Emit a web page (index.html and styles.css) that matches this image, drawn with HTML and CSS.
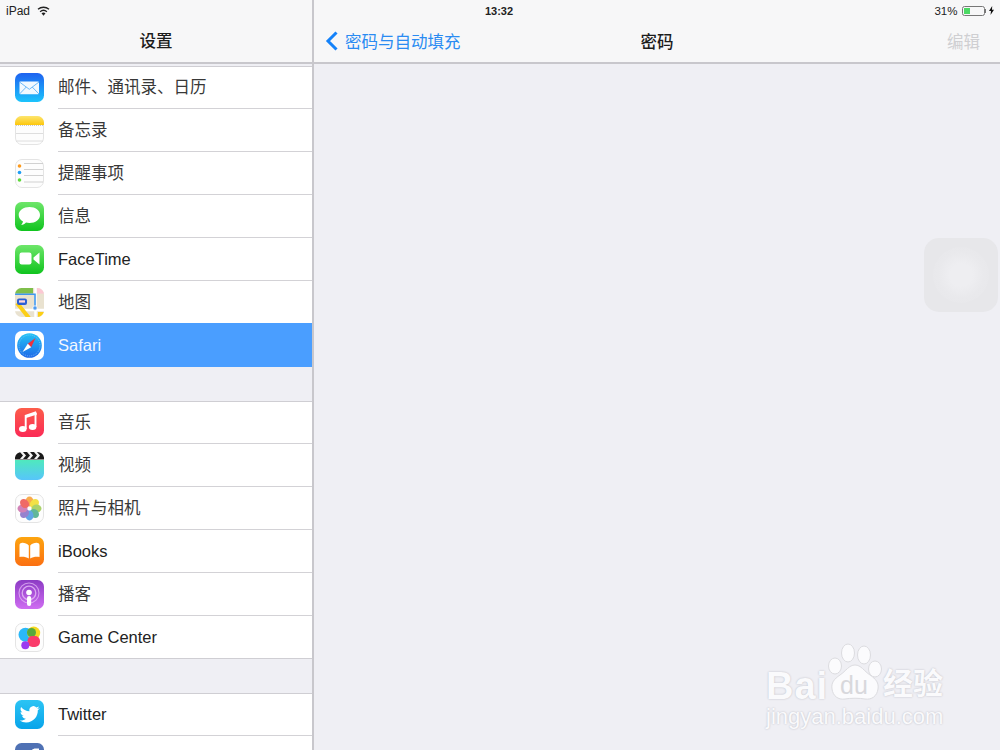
FILE: index.html
```html
<!DOCTYPE html>
<html lang="zh">
<head>
<meta charset="utf-8">
<title>设置</title>
<link rel="stylesheet" href="styles.css">
</head>
<body>
<div class="ipad">
  <aside class="sidebar">
    <header class="side-head">
      <h1 class="side-title">设置</h1>
    </header>
    <div class="list-scroll">
      <ul class="group">
        <li class="row">
          <svg class="ico" viewBox="0 0 29 29"><defs><linearGradient id="gm" x1="0" y1="0" x2="0" y2="1"><stop offset="0" stop-color="#1e62f0"/><stop offset="1" stop-color="#1cc4fc"/></linearGradient></defs><rect width="29" height="29" rx="6.5" fill="url(#gm)"/><rect x="4.500" y="8.500" width="19.500" height="12.800" rx="1" fill="#f2f9ff"/><path d="M4.500 9l9.800 7.300L24 9M4.500 21l6.800-7M24 21l-6.800-7" fill="none" stroke="#5fb2f7" stroke-width=".9"/></svg>
          <span class="label zh">邮件、通讯录、日历</span>
        </li>
        <li class="row">
          <svg class="ico" viewBox="0 0 29 29"><defs><linearGradient id="gn" x1="0" y1="0" x2="0" y2="1"><stop offset="0" stop-color="#fde56e"/><stop offset="1" stop-color="#fdc70c"/></linearGradient></defs><rect x=".5" y=".5" width="28" height="28" rx="6.5" fill="#fdfdfd" stroke="#e4e4e4"/><path d="M0 9V6.500A6.500 6.500 0 0 1 6.500 0h16A6.500 6.500 0 0 1 29 6.500V9Z" fill="url(#gn)"/><path d="M1 9.500h27" stroke="#bbb" stroke-width=".8" stroke-dasharray="1 1"/><path d="M1 17.500h27M1 25h27" stroke="#d6d6d6" stroke-width=".8"/></svg>
          <span class="label zh">备忘录</span>
        </li>
        <li class="row">
          <svg class="ico" viewBox="0 0 29 29"><rect x=".5" y=".5" width="28" height="28" rx="6.5" fill="#fdfdfd" stroke="#e4e4e4"/><path d="M9 4.500h19M9 10.500h19M9 16.500h19M9 23h19" stroke="#bdbdbd" stroke-width=".7"/><circle cx="4.500" cy="7" r="1.800" fill="#fd9a1c"/><circle cx="4.500" cy="13.500" r="1.800" fill="#1e9df5"/><circle cx="4.500" cy="21" r="1.800" fill="#5fd93b"/></svg>
          <span class="label zh">提醒事项</span>
        </li>
        <li class="row">
          <svg class="ico" viewBox="0 0 29 29"><defs><linearGradient id="gg" x1="0" y1="0" x2="0" y2="1"><stop offset="0" stop-color="#6ee66a"/><stop offset="1" stop-color="#10c41e"/></linearGradient></defs><rect width="29" height="29" rx="6.5" fill="url(#gg)"/><path d="M14.500 5c-6 0-10.800 3.500-10.800 8 0 2.800 1.700 5 4.300 6.400-.3 1.300-1.200 2.800-2 3.600 2 0 3.800-1.200 5-2.400 1 .2 2.300.4 3.500.4 6 0 10.500-3.500 10.500-8s-4.500-8-10.500-8Z" fill="#fff"/></svg>
          <span class="label zh">信息</span>
        </li>
        <li class="row">
          <svg class="ico" viewBox="0 0 29 29"><rect width="29" height="29" rx="6.500" fill="url(#gg)"/><rect x="4.500" y="7.500" width="12" height="12" rx="2.200" fill="#fff"/><path d="M18.500 12.500 24.500 7.500v12L18.500 14.500Z" fill="#fff"/></svg>
          <span class="label">FaceTime</span>
        </li>
        <li class="row">
          <svg class="ico" viewBox="0 0 29 29"><clipPath id="cm"><rect width="29" height="29" rx="6.500"/></clipPath><g clip-path="url(#cm)"><rect width="29" height="29" fill="#e9e2d0"/><rect width="18" height="5.600" fill="#7fbf4b"/><rect x="22" width="7" height="5.600" fill="#fcc8d4"/><path d="M20.500 0v29M0 22h29" stroke="#fff" stroke-width="2.500" fill="none"/><path d="M0 6.300h20V20" stroke="#3f97ee" stroke-width="1.600" fill="none"/><path d="M2 15 14 30" stroke="#fccf16" stroke-width="4" fill="none"/><rect x="2" y="10.500" width="10" height="6.500" rx="2" fill="#2c5fd6"/><rect x="4" y="12.300" width="6" height="2.300" fill="#ffd7dc"/><circle cx="20" cy="20" r="2.200" fill="#4d9bf0" stroke="#fff" stroke-width=".8"/><rect x="23" y="24" width="6" height="5" fill="#fccf16"/></g></svg>
          <span class="label zh">地图</span>
        </li>
        <li class="row selected">
          <svg class="ico" viewBox="0 0 29 29"><defs><linearGradient id="gs" x1="0" y1="0" x2="0" y2="1"><stop offset="0" stop-color="#22c3f5"/><stop offset="1" stop-color="#2069e8"/></linearGradient></defs><rect width="29" height="29" rx="6.500" fill="#fff"/><circle cx="14.500" cy="14.500" r="12.300" fill="url(#gs)"/><circle cx="14.500" cy="14.500" r="10.500" fill="none" stroke="#9fd4fa" stroke-width=".6" stroke-dasharray="1 1"/><path d="M20.500 7 12.800 12.800 16.200 16.200Z" fill="#f0313c"/><path d="M7.500 21 12.800 12.800 16.200 16.200Z" fill="#fff"/></svg>
          <span class="label">Safari</span>
        </li>
      </ul>
      <ul class="group">
        <li class="row">
          <svg class="ico" viewBox="0 0 29 29"><defs><linearGradient id="gr" x1="0" y1="0" x2="0" y2="1"><stop offset="0" stop-color="#fc5d4a"/><stop offset="1" stop-color="#fb2a56"/></linearGradient></defs><rect width="29" height="29" rx="6.500" fill="url(#gr)"/><path d="M10.500 8.500 21.500 4.800" fill="none" stroke="#fff" stroke-width="3.400"/><path d="M10.700 7V21M20.500 5V19" fill="none" stroke="#fff" stroke-width="1.900"/><ellipse cx="7.800" cy="21" rx="3.800" ry="3" fill="#fff"/><ellipse cx="17.600" cy="19" rx="3.800" ry="3" fill="#fff"/></svg>
          <span class="label zh">音乐</span>
        </li>
        <li class="row">
          <svg class="ico" viewBox="0 0 29 29"><defs><linearGradient id="gv" x1="0" y1="0" x2="0" y2="1"><stop offset="0" stop-color="#4fe9bd"/><stop offset="1" stop-color="#57c5fb"/></linearGradient></defs><path d="M0 9h29v13.500a6.500 6.500 0 0 1-6.500 6.500h-16A6.500 6.500 0 0 1 0 22.500Z" fill="url(#gv)"/><path d="M0 8.500V6.500A6.500 6.500 0 0 1 6.500 1h16A6.500 6.500 0 0 1 29 6.500v2Z" fill="#1a1a1a"/><path d="M5 1h3l3 3.500-3 3.500H5l3-3.500ZM12 1h3l3 3.500-3 3.500h-3l3-3.500ZM19 1h3l3 3.500-3 3.500h-3l3-3.500Z" fill="#f4f4f4"/></svg>
          <span class="label zh">视频</span>
        </li>
        <li class="row">
          <svg class="ico" viewBox="0 0 29 29"><rect x=".5" y=".5" width="28" height="28" rx="6.500" fill="#fdfdfd" stroke="#e4e4e4"/><g opacity=".82" transform="translate(14.500 14.500)"><ellipse cy="-7" rx="4" ry="5" fill="#f99a27"/><ellipse cy="-7" rx="4" ry="5" fill="#f0dc1e" transform="rotate(45)"/><ellipse cy="-7" rx="4" ry="5" fill="#98c94a" transform="rotate(90)"/><ellipse cy="-7" rx="4" ry="5" fill="#3fa884" transform="rotate(135)"/><ellipse cy="-7" rx="4" ry="5" fill="#3f94e0" transform="rotate(180)"/><ellipse cy="-7" rx="4" ry="5" fill="#8068c4" transform="rotate(225)"/><ellipse cy="-7" rx="4" ry="5" fill="#c868a8" transform="rotate(270)"/><ellipse cy="-7" rx="4" ry="5" fill="#ec4a46" transform="rotate(315)"/></g></svg>
          <span class="label zh">照片与相机</span>
        </li>
        <li class="row">
          <svg class="ico" viewBox="0 0 29 29"><defs><linearGradient id="gb" x1="0" y1="0" x2="0" y2="1"><stop offset="0" stop-color="#fda50f"/><stop offset="1" stop-color="#fb6f12"/></linearGradient></defs><rect width="29" height="29" rx="6.500" fill="url(#gb)"/><path d="M13.800 8.500C12 6.500 8.500 5.500 6.500 6c-1.500.3-2 1-2 2.500V20c3.500-.5 7 0 9.300 1.500ZM15.200 8.500c1.800-2 5.300-3 7.300-2.500 1.500.3 2 1 2 2.500V20c-3.500-.5-7 0-9.300 1.500Z" fill="#fff"/></svg>
          <span class="label">iBooks</span>
        </li>
        <li class="row">
          <svg class="ico" viewBox="0 0 29 29"><defs><linearGradient id="gp" x1="0" y1="0" x2="0" y2="1"><stop offset="0" stop-color="#8c3bc4"/><stop offset="1" stop-color="#cf6df2"/></linearGradient></defs><rect width="29" height="29" rx="6.500" fill="url(#gp)"/><circle cx="14" cy="13" r="10" fill="none" stroke="#e4b8f5" stroke-width="1.100" opacity=".75"/><circle cx="14" cy="13" r="6.800" fill="none" stroke="#e4b8f5" stroke-width="1.300" opacity=".85"/><circle cx="14" cy="12.500" r="2.800" fill="#fff"/><rect x="12" y="16" width="4.200" height="10" rx="2.100" fill="#fff"/></svg>
          <span class="label zh">播客</span>
        </li>
        <li class="row">
          <svg class="ico" viewBox="0 0 29 29"><rect x=".5" y=".5" width="28" height="28" rx="6.500" fill="#fdfdfd" stroke="#e4e4e4"/><circle cx="10.500" cy="11.700" r="7" fill="#2ab8f8"/><circle cx="18.700" cy="10" r="6.500" fill="#f6d820"/><circle cx="16.500" cy="9.500" r="4.500" fill="#57a83c"/><rect x="12.500" y="13" width="12.500" height="11" rx="5" fill="#fa3b6a"/><circle cx="10.300" cy="22.300" r="4" fill="#9b3cf0"/></svg>
          <span class="label">Game Center</span>
        </li>
      </ul>
      <ul class="group">
        <li class="row">
          <svg class="ico" viewBox="0 0 29 29"><defs><linearGradient id="gt" x1="0" y1="0" x2="0" y2="1"><stop offset="0" stop-color="#2cc4f4"/><stop offset="1" stop-color="#08a4ea"/></linearGradient></defs><rect width="29" height="29" rx="6.500" fill="url(#gt)"/><path d="M24.500 8.200c-.8.400-1.500.5-2.300.6.800-.5 1.500-1.200 1.800-2.200-.8.500-1.600.8-2.600 1a4 4 0 0 0-6.900 3.700c-3.400-.2-6.400-1.800-8.400-4.300-1.100 1.900-.5 4.200 1.300 5.400-.7 0-1.300-.2-1.800-.5 0 2 1.400 3.600 3.300 4-.6.200-1.200.2-1.800.1.500 1.600 2 2.700 3.800 2.800-1.800 1.400-4 2-6.100 1.700 1.800 1.200 4 1.900 6.300 1.900 7.600 0 12-6.400 11.700-12.200.8-.6 1.500-1.300 2-2Z" fill="#fff"/></svg>
          <span class="label">Twitter</span>
        </li>
        <li class="row">
          <svg class="ico" viewBox="0 0 29 29"><rect width="29" height="29" rx="6.500" fill="#4f71b4"/><path d="M16 29V17h-3v-4h3v-3c0-3 2-4.500 4.500-4.500H24V9h-2c-1.500 0-2 .6-2 2v2h4l-.5 4H20v12Z" fill="#fff"/></svg>
        </li>
      </ul>
    </div>
  </aside>
  <main class="detail">
    <header class="detail-head">
      <nav class="nav">
        <a class="back">
          <svg class="chev" width="14" height="20" viewBox="0 0 14 20"><path d="M11.500 1.500 3 10l8.500 8.500" fill="none" stroke="#1482fa" stroke-width="3"/></svg>
          <span>密码与自动填充</span>
        </a>
        <h2 class="detail-title">密码</h2>
        <span class="edit">编辑</span>
      </nav>
    </header>
  </main>
  <div class="statusbar">
    <div class="status-left">
      <span>iPad</span>
      <svg width="13" height="10" viewBox="0 0 13 10"><path d="M6.500 9.800 4.500 7.300a3.200 3.200 0 0 1 4 0Z" fill="#222"/><path d="M3.100 5.700a5.400 5.400 0 0 1 6.800 0M1 3.200a8.700 8.700 0 0 1 11 0" fill="none" stroke="#222" stroke-width="1.400"/></svg>
    </div>
    <span class="clock">13:32</span>
    <div class="status-right">
      <span>31%</span>
      <svg width="23" height="10" viewBox="0 0 23 10"><rect x=".5" y=".5" width="22" height="9" rx="2" fill="none" stroke="#777" stroke-width="1"/><rect x="2" y="2" width="6" height="6" fill="#4cd964"/></svg>
      <i class="nub"></i>
      <svg width="5" height="9" viewBox="0 0 5 9"><path d="M3.200 0 0 5h2L1.500 9 5 3.800H3Z" fill="#111"/></svg>
    </div>
  </div>
  <div class="assistive"><div class="assistive-dot"></div></div>
  <div class="watermark">
    <div class="wm-top">
      <span class="wm-bai">Bai</span>
      <svg class="wm-paw" width="58" height="60" viewBox="0 0 58 60">
        <g fill="#fbfbfd" stroke="#dcdce0" stroke-width="1">
          <ellipse cx="9" cy="24" rx="6.500" ry="8"/><ellipse cx="22" cy="11" rx="6.500" ry="9"/><ellipse cx="38" cy="13" rx="6.500" ry="9"/><ellipse cx="49" cy="27" rx="6.500" ry="8"/>
          <path d="M29 23c6 0 9 6 15 10 6 4 9 8 8 14-1 7-6 11-13 10-5-1-15-1-20 0-7 1-12-3-13-10-1-6 2-10 8-14 6-4 9-10 15-10Z"/>
        </g>
        <text x="28" y="52" class="wm-du" text-anchor="middle">du</text>
      </svg>
      <span class="wm-jy">经验</span>
    </div>
    <div class="wm-url">jingyan.baidu.com</div>
  </div>
</div>
</body>
</html>
```
FILE: styles.css
```css
* { box-sizing: border-box; margin: 0; padding: 0; }
html, body { width: 1000px; height: 750px; overflow: hidden; }
body {
  background: #efeff4;
  font-family: "Liberation Sans", "Noto Sans CJK SC", sans-serif;
  color: #222;
}
.ipad { position: relative; display: flex; width: 1000px; height: 750px; overflow: hidden; }

.sidebar { width: 314px; height: 750px; flex: none; border-right: 2px solid #c8c7cc; background: #efeff4; overflow: hidden; }
.side-head {
  height: 64px;
  padding-top: 23px;
  background: #f7f7f8;
  border-bottom: 2px solid #c8c7cc;
}
.side-title { text-align: center; font-size: 16.500px; line-height: 36px; font-weight: 500; color: #1c1c1c; }

.list-scroll { display: flex; flex-direction: column; gap: 34px; margin-top: 2px; }
.group { list-style: none; background: #fff; }
.row {
  position: relative;
  display: flex;
  align-items: center;
  height: 43px;
  padding-left: 15px;
  background: #fff;
}
.row + .row::before {
  content: "";
  position: absolute;
  left: 58px; right: 0; top: -1px;
  height: 1px;
  background: #d3d2d6;
}
.row:first-child::before {
  content: "";
  position: absolute;
  left: 0; right: 0; top: 0;
  height: 1px;
  background: #cfced3;
}
.row:last-child::after {
  content: "";
  position: absolute;
  left: 0; right: 0; bottom: 0;
  height: 1px;
  background: #cfced3;
}
.ico { width: 29px; height: 29px; flex: none; margin-right: 14px; }
.label { font-size: 16.500px; color: #222; white-space: nowrap; }
.label.zh { color: #383838; margin-bottom: 3px; }
.row.selected { background: #4a9eff; height: 44px; margin-top: -1px; }
.row.selected::before, .row.selected::after { display: none; }
.row.selected .label { color: #f2f8ff; }

.detail { flex: 1; }
.detail-head { height: 64px; padding-top: 23px; background: #f7f7f8; border-bottom: 2px solid #c8c7cc; }
.nav { display: grid; grid-template-columns: 1fr auto 1fr; align-items: center; height: 36px; padding: 0 20px; font-size: 16.500px; }
.back { display: flex; align-items: center; gap: 6px; margin-left: -9px; color: #2a8bf2; }
.detail-title { font-size: 16.500px; font-weight: 500; color: #1c1c1c; }
.edit { justify-self: end; color: #cfcfd2; }

.statusbar {
  position: absolute; left: 0; top: 0; width: 1000px; height: 21px;
  display: grid; grid-template-columns: 1fr auto 1fr; align-items: center;
  padding: 0 6px;
  font-size: 11px; color: #222;
}
.status-left { display: flex; align-items: center; gap: 7px; font-size: 12px; }
.clock { font-weight: 700; margin-left: -2px; }
.status-right { justify-self: end; display: flex; align-items: center; }
.status-right span { margin-right: 4px; font-size: 11.500px; }
.nub { width: 1.500px; height: 4px; background: #777; margin-right: 3px; }

.assistive {
  position: absolute; left: 924px; top: 238px; width: 74px; height: 74px;
  border-radius: 15px; background: #e7e7ea;
  display: flex; align-items: center; justify-content: center;
}
.assistive-dot { width: 56px; height: 56px; border-radius: 50%; background: radial-gradient(circle, #eeeef1 0 28%, #e9e9ec 58%, #e7e7ea 100%); }

.watermark { position: absolute; left: 766px; top: 642px; width: 190px; }
.wm-top { display: flex; align-items: flex-end; height: 60px; }
.wm-bai, .wm-jy, .wm-url { color: #fafafc; text-shadow: 0 0 2px #b8b8c0; white-space: nowrap; }
.wm-bai { font-size: 38px; font-weight: 700; line-height: 32px; letter-spacing: 1px; width: 60px; }
.wm-paw { flex: none; }
.wm-du { font-family: "Liberation Sans", sans-serif; font-size: 25px; fill: #d8d8dc; }
.wm-jy { font-size: 30px; line-height: 36px; font-weight: 700; margin-left: -1px; }
.wm-url { font-size: 22px; line-height: 26px; margin-top: 2px; }
```
